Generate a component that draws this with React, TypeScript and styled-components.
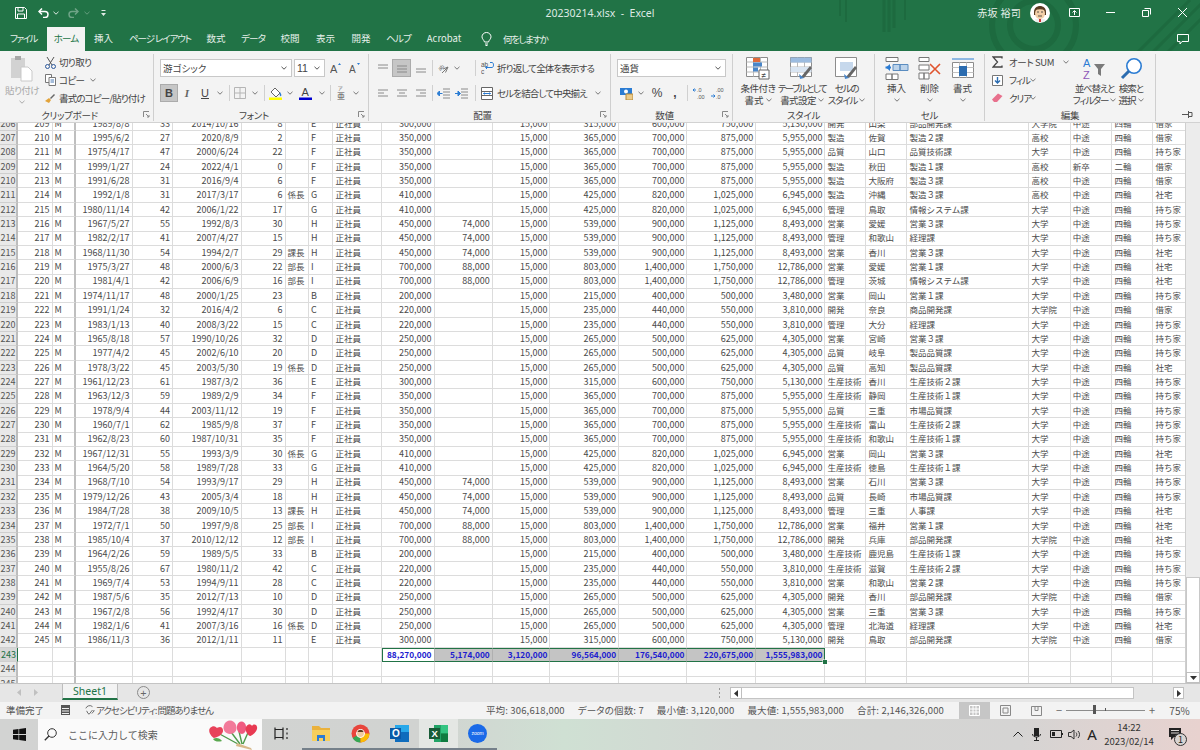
import React from 'react';
import styled, { createGlobalStyle, css } from 'styled-components';

const JP = '"Noto Sans CJK JP", "Noto Sans", sans-serif';

const GlobalStyle = createGlobalStyle`
  html, body { margin: 0; padding: 0; background: #fff; }
  * { box-sizing: border-box; }
  body { font-family: ${JP}; }
`;

/* ---------- sheet data ---------- */
const widths = [18, 34.5, 23.5, 56.5, 40.5, 68.5, 44, 23.5, 23.5, 49, 53, 58.2, 57.8, 68.6, 68.4, 68.8, 69.2, 41, 41, 122, 41.3, 41.7, 41, 32.5];
const GRID = widths.map((w) => `${w}px`).join(' ');
const RIGHT_COLS = [1, 3, 4, 5, 6, 10, 11, 12, 13, 14, 15, 16];
const CJK_COLS = [7, 9, 17, 18, 19, 20, 21, 22, 23];

const pay: Record<string, string[]> = {
  B: ['200,000', '', '15,000', '215,000', '400,000', '500,000', '3,480,000'],
  C: ['220,000', '', '15,000', '235,000', '440,000', '550,000', '3,810,000'],
  D: ['250,000', '', '15,000', '265,000', '500,000', '625,000', '4,305,000'],
  E: ['300,000', '', '15,000', '315,000', '600,000', '750,000', '5,130,000'],
  F: ['350,000', '', '15,000', '365,000', '700,000', '875,000', '5,955,000'],
  G: ['410,000', '', '15,000', '425,000', '820,000', '1,025,000', '6,945,000'],
  H: ['450,000', '74,000', '15,000', '539,000', '900,000', '1,125,000', '8,493,000'],
  I: ['700,000', '88,000', '15,000', '803,000', '1,400,000', '1,750,000', '12,786,000'],
};

// id|birth|age|hired|years|title|grade|dept|pref|section|school|entry|commute|home
const raw = [
  '209|1989/8/8|33|2014/10/16|8||E|開発|山梨|部品開発課|大学院|中途|四輪|借家',
  '210|1995/6/2|27|2020/8/9|2||F|製造|佐賀|製造２課|高校|中途|四輪|借家',
  '211|1975/4/17|47|2000/6/24|22||F|品質|山口|品質技術課|大学|中途|四輪|持ち家',
  '212|1999/1/27|24|2022/4/1|0||F|製造|秋田|製造１課|高校|新卒|二輪|借家',
  '213|1991/6/28|31|2016/9/4|6||F|製造|大阪府|製造３課|高校|中途|四輪|借家',
  '214|1992/1/8|31|2017/3/17|6|係長|G|製造|沖縄|製造３課|高校|中途|四輪|社宅',
  '215|1980/11/14|42|2006/1/22|17||G|管理|鳥取|情報システム課|大学|中途|四輪|持ち家',
  '216|1967/5/27|55|1992/8/3|30||H|営業|愛媛|営業３課|大学|中途|四輪|持ち家',
  '217|1982/2/17|41|2007/4/27|15||H|管理|和歌山|経理課|大学|中途|四輪|持ち家',
  '218|1968/11/30|54|1994/2/7|29|課長|H|営業|香川|営業３課|大学|中途|四輪|社宅',
  '219|1975/3/27|48|2000/6/3|22|部長|I|営業|愛媛|営業１課|大学|中途|四輪|社宅',
  '220|1981/4/1|42|2006/6/9|16|部長|I|管理|茨城|情報システム課|大学|中途|四輪|社宅',
  '221|1974/11/17|48|2000/1/25|23||B|営業|岡山|営業１課|大学|中途|四輪|持ち家',
  '222|1991/1/24|32|2016/4/2|6||C|開発|奈良|商品開発課|大学院|中途|四輪|借家',
  '223|1983/1/13|40|2008/3/22|15||C|管理|大分|経理課|大学|中途|四輪|持ち家',
  '224|1965/8/18|57|1990/10/26|32||D|営業|宮崎|営業３課|大学|中途|四輪|持ち家',
  '225|1977/4/2|45|2002/6/10|20||D|品質|岐阜|製品品質課|大学|中途|四輪|持ち家',
  '226|1978/3/22|45|2003/5/30|19|係長|D|品質|高知|製品品質課|大学|中途|四輪|社宅',
  '227|1961/12/23|61|1987/3/2|36||E|生産技術|香川|生産技術２課|大学|中途|四輪|持ち家',
  '228|1963/12/3|59|1989/2/9|34||F|生産技術|静岡|生産技術１課|大学|中途|四輪|持ち家',
  '229|1978/9/4|44|2003/11/12|19||F|品質|三重|市場品質課|大学|中途|四輪|持ち家',
  '230|1960/7/1|62|1985/9/8|37||F|生産技術|富山|生産技術２課|大学|中途|四輪|持ち家',
  '231|1962/8/23|60|1987/10/31|35||F|生産技術|和歌山|生産技術１課|大学|中途|四輪|持ち家',
  '232|1967/12/31|55|1993/3/9|30|係長|G|営業|岡山|営業３課|大学|中途|四輪|社宅',
  '233|1964/5/20|58|1989/7/28|33||G|生産技術|徳島|生産技術１課|大学|中途|四輪|持ち家',
  '234|1968/7/10|54|1993/9/17|29||H|営業|石川|営業３課|大学|中途|四輪|持ち家',
  '235|1979/12/26|43|2005/3/4|18||H|品質|長崎|市場品質課|大学|中途|四輪|持ち家',
  '236|1984/7/28|38|2009/10/5|13|課長|H|管理|三重|人事課|大学|中途|四輪|社宅',
  '237|1972/7/1|50|1997/9/8|25|部長|I|営業|福井|営業１課|大学|中途|四輪|社宅',
  '238|1985/10/4|37|2010/12/12|12|部長|I|開発|兵庫|部品開発課|大学院|中途|四輪|社宅',
  '239|1964/2/26|59|1989/5/5|33||B|生産技術|鹿児島|生産技術１課|大学|中途|四輪|持ち家',
  '240|1955/8/26|67|1980/11/2|42||C|生産技術|滋賀|生産技術２課|大学|中途|四輪|持ち家',
  '241|1969/7/4|53|1994/9/11|28||C|営業|和歌山|営業２課|大学|中途|四輪|持ち家',
  '242|1987/5/6|35|2012/7/13|10||D|開発|香川|部品開発課|大学院|中途|四輪|借家',
  '243|1967/2/8|56|1992/4/17|30||D|営業|三重|営業３課|大学|中途|四輪|持ち家',
  '244|1982/1/6|41|2007/3/16|16|係長|D|管理|北海道|経理課|大学|中途|四輪|社宅',
  '245|1986/11/3|36|2012/1/11|11||E|開発|鳥取|部品開発課|大学院|中途|四輪|借家',
];

const toCells = (line: string) => {
  const [id, birth, age, hired, years, title, grade, ...rest] = line.split('|');
  return [id, 'M', birth, age, hired, years, title, grade, '正社員', ...pay[grade], ...rest];
};

const totals = ['88,270,000', '5,174,000', '3,120,000', '96,564,000', '176,540,000', '220,675,000', '1,555,983,000'];

/* ---------- page frame ---------- */
const Page = styled.div`
  width: 1200px;
  height: 750px;
  display: flex;
  flex-direction: column;
  overflow: hidden;
  font-family: ${JP};
  font-feature-settings: 'palt';
`;

const Header = styled.header`
  position: relative;
  height: 51px;
  flex: none;
  background: #217346;
  color: #e6f0ea;
  overflow: hidden;
`;

const HeaderArt = styled.svg`
  position: absolute;
  inset: 0;
`;

const TitleRow = styled.div`
  position: relative;
  height: 25px;
  display: grid;
  grid-template-columns: 1fr auto 1fr;
  align-items: center;
`;

const QuickAccess = styled.div`
  display: flex;
  align-items: center;
  padding-left: 14px;
`;

const QuickBtn = styled.span<{ $w: number; $dim?: boolean; $ml?: number }>`
  width: ${(p) => p.$w}px;
  height: 16px;
  margin-left: ${(p) => p.$ml ?? 0}px;
  display: flex;
  align-items: center;
  justify-content: center;
  opacity: ${(p) => (p.$dim ? 0.35 : 1)};
`;

const FileName = styled.div`
  font-family: 'Noto Sans', sans-serif;
  font-size: 10.5px;
  white-space: pre;
  color: #dfeae4;
`;

const WindowControls = styled.div`
  display: flex;
  align-items: center;
  justify-content: flex-end;
`;

const UserName = styled.span`
  font-size: 10px;
  margin-right: 9px;
  letter-spacing: 0.3px;
`;

const AvatarSlot = styled.span`
  display: flex;
  margin-right: 6px;
`;

const WinBtn = styled.span`
  width: 36px;
  height: 25px;
  display: flex;
  align-items: center;
  justify-content: center;
`;

const TabRow = styled.nav`
  position: relative;
  height: 26px;
  display: flex;
  align-items: flex-end;
`;

const Tab = styled.div<{ $w: number; $active?: boolean; $ls?: number }>`
  width: ${(p) => p.$w}px;
  height: 24px;
  line-height: 23px;
  text-align: center;
  font-size: 9.5px;
  white-space: nowrap;
  letter-spacing: ${(p) => p.$ls ?? 0}px;
  background: ${(p) => (p.$active ? '#f3f3f3' : 'transparent')};
  color: ${(p) => (p.$active ? '#217346' : '#e6f0ea')};
`;

const TellMe = styled.div`
  display: flex;
  align-items: center;
  gap: 11px;
  height: 24px;
  padding-left: 11px;
  font-size: 9.5px;
  letter-spacing: -1.4px;
`;

const CommentBtn = styled.div`
  margin-left: auto;
  height: 24px;
  padding-right: 11px;
  display: flex;
  align-items: center;
`;

/* ---------- ribbon ---------- */
const Ribbon = styled.section`
  height: 72px;
  flex: none;
  display: flex;
  background: #f3f3f3;
  border-bottom: 1px solid #d2d2d2;
  color: #444;
  font-size: 9.5px;
  position: relative;
  z-index: 2;
`;

const Group = styled.div<{ $w: number; $plain?: boolean }>`
  width: ${(p) => p.$w}px;
  flex: none;
  display: flex;
  flex-direction: column;
  margin-top: 3px;
  height: 67px;
  border-right: ${(p) => (p.$plain ? 'none' : '1px solid #cfcfcf')};
`;

const GroupBody = styled.div<{ $pad?: number }>`
  height: 56px;
  display: flex;
  padding-left: ${(p) => p.$pad ?? 0}px;
`;

const GroupLabel = styled.div<{ $launcher?: boolean }>`
  position: relative;
  height: 12px;
  line-height: 12px;
  text-align: center;
  white-space: nowrap;
  font-size: 9.5px;
  letter-spacing: -0.3px;
  padding-right: ${(p) => (p.$launcher ? 14 : 0)}px;
`;

const Launcher = styled.svg`
  position: absolute;
  right: 3px;
  top: 2px;
`;

const PinIcon = styled.svg`
  position: absolute;
  right: 7px;
  top: 2px;
`;

const Stack = styled.div<{ $w?: number; $top?: number }>`
  width: ${(p) => (p.$w ? `${p.$w}px` : 'auto')};
  margin-top: ${(p) => p.$top ?? 0}px;
  display: flex;
  flex-direction: column;
`;

const ActionRow = styled.div`
  height: 18px;
  display: flex;
  align-items: center;
  white-space: nowrap;
`;

const ActionIcon = styled.span<{ $w: number }>`
  width: ${(p) => p.$w}px;
  flex: none;
  display: flex;
  align-items: center;
  justify-content: center;
`;

const Label = styled.span<{ $ls?: number; $w?: number; $ml?: number }>`
  display: inline-block;
  white-space: nowrap;
  letter-spacing: ${(p) => p.$ls ?? 0}px;
  width: ${(p) => (p.$w ? `${p.$w}px` : 'auto')};
  margin-left: ${(p) => p.$ml ?? 0}px;
`;

const ToolRow = styled.div<{ $top?: number }>`
  height: 18px;
  margin-top: ${(p) => p.$top ?? 0}px;
  display: flex;
  align-items: center;
  white-space: nowrap;
`;

const glyphs = {
  bold: css`font-weight: 700; font-family: 'Liberation Sans', sans-serif;`,
  italic: css`font-style: italic; font-weight: 700; font-family: 'Liberation Serif', serif; color: #666;`,
  under: css`text-decoration: underline; font-family: 'Liberation Sans', sans-serif;`,
  percent: css`font-size: 12px; font-family: 'Liberation Sans', sans-serif;`,
  comma: css`font-size: 12px; font-weight: 700; font-family: 'Liberation Sans', sans-serif;`,
};

const ToolBtn = styled.span<{ $w: number; $on?: boolean; $glyph?: keyof typeof glyphs; $ml?: number }>`
  width: ${(p) => p.$w}px;
  height: 18px;
  margin-left: ${(p) => p.$ml ?? 0}px;
  flex: none;
  display: flex;
  align-items: center;
  justify-content: center;
  font-size: 11px;
  background: ${(p) => (p.$on ? '#c6c6c6' : 'transparent')};
  box-shadow: ${(p) => (p.$on ? 'inset 0 0 0 1px #ababab' : 'none')};
  ${(p) => p.$glyph && glyphs[p.$glyph]}
`;

const ToolSep = styled.span<{ $w: number }>`
  width: ${(p) => p.$w}px;
  height: 16px;
  flex: none;
  display: flex;
  justify-content: center;
  &::after {
    content: '';
    width: 1px;
    background: #d0d0d0;
  }
`;

const ComboBox = styled.div<{ $w: number; $latin?: boolean; $ml?: number }>`
  width: ${(p) => p.$w}px;
  height: 18px;
  margin-left: ${(p) => p.$ml ?? 0}px;
  flex: none;
  display: flex;
  align-items: center;
  justify-content: space-between;
  padding: 0 4px 0 2px;
  background: #fff;
  border: 1px solid #c8c8c8;
  font-size: ${(p) => (p.$latin ? 10.5 : 9.5)}px;
  font-family: ${(p) => (p.$latin ? "'Liberation Sans', sans-serif" : 'inherit')};
  color: #444;
`;

const BigButton = styled.div<{ $w: number }>`
  width: ${(p) => p.$w}px;
  flex: none;
  display: flex;
  flex-direction: column;
  align-items: center;
  padding-top: 1px;
`;

const BigIcon = styled.div`
  height: 27px;
  display: flex;
  align-items: center;
  justify-content: center;
`;

const BigLine = styled.div<{ $muted?: boolean; $top?: number; $ls?: number }>`
  height: 12px;
  margin-top: ${(p) => p.$top ?? 0}px;
  line-height: 12px;
  white-space: nowrap;
  display: flex;
  align-items: center;
  justify-content: center;
  gap: 2px;
  letter-spacing: ${(p) => p.$ls ?? 0}px;
  color: ${(p) => (p.$muted ? '#a8a8a8' : '#444')};
`;

const Chev = ({ c = '#777' }: { c?: string }) => (
  <svg width="6" height="4" viewBox="0 0 6 4"><path d="M.5.8 3 3.2 5.5.8" fill="none" stroke={c} /></svg>
);

/* ---------- sheet ---------- */
const SheetArea = styled.div`
  height: 561px;
  flex: none;
  display: flex;
  border-bottom: 1px solid #c4c4c4;
`;

const SheetView = styled.div`
  width: 1186px;
  flex: none;
  overflow: hidden;
  position: relative;
  background: #fff;
  border-right: 1px solid #cfcfcf;
`;

const SheetRows = styled.div`
  margin-top: -6.5px;
  color: #4a4a4a;
  font-size: 9px;
  font-feature-settings: normal;
`;

const SheetRow = styled.div`
  display: grid;
  grid-template-columns: ${GRID};
  height: 14.37px;
`;

const RowHead = styled.div<{ $active?: boolean }>`
  background: ${(p) => (p.$active ? '#d6d6d6' : '#e9e9e9')};
  color: ${(p) => (p.$active ? '#217346' : '#555')};
  border-right: ${(p) => (p.$active ? '1.5px solid #217346' : '2px solid #bdbdbd')};
  border-bottom: 1px solid #cfcfcf;
  text-align: center;
  line-height: 13.5px;
`;

const Cell = styled.div<{ $right?: boolean; $freeze?: boolean; $cjk?: boolean; $indent?: boolean }>`
  border-right: ${(p) => (p.$freeze ? '2px solid #bfbfbf' : '1px solid #dcdcdc')};
  border-bottom: 1px solid #dcdcdc;
  text-align: ${(p) => (p.$right ? 'right' : 'left')};
  padding: 0 2px 0 ${(p) => (p.$indent ? 3 : 2)}px;
  font-size: ${(p) => (p.$cjk ? 8.5 : 9)}px;
  line-height: 13.5px;
  white-space: nowrap;
`;

const TotalCell = styled.div<{ $first?: boolean; $last?: boolean }>`
  position: relative;
  background: ${(p) => (p.$first ? '#fff' : '#c4c4c4')};
  border-top: 1.5px solid #217346;
  border-bottom: 1.5px solid #217346;
  border-left: ${(p) => (p.$first ? '1.5px solid #217346' : 'none')};
  border-right: ${(p) => (p.$last ? '1.5px solid #217346' : '1px solid #b0b0b0')};
  color: #1c1cd0;
  font-size: 8.3px;
  font-weight: 700;
  text-align: right;
  padding-right: 2px;
  line-height: 11.5px;
  white-space: nowrap;
`;

const FillHandle = styled.span`
  position: absolute;
  right: -3px;
  bottom: -3px;
  width: 4px;
  height: 4px;
  background: #217346;
  box-shadow: 0 0 0 0.5px #fff;
`;

const VScroll = styled.div`
  flex: 1;
  display: flex;
  flex-direction: column;
  justify-content: flex-end;
  background: #ececec;
`;

const VThumb = styled.div`
  height: 95px;
  background: #fff;
  border: 1px solid #c8c8c8;
  border-bottom: none;
`;

const ArrowBtn = styled.div<{ $w?: number; $h?: number }>`
  width: ${(p) => (p.$w ? `${p.$w}px` : 'auto')};
  height: ${(p) => (p.$h ? `${p.$h}px` : 'auto')};
  flex: none;
  display: flex;
  align-items: center;
  justify-content: center;
  background: #fff;
  border: 1px solid #bfbfbf;
`;

/* ---------- sheet tab bar ---------- */
const TabBar = styled.div`
  height: 18px;
  flex: none;
  display: flex;
  align-items: flex-start;
  background: #e6e6e6;
  color: #444;
`;

const NavArrows = styled.div`
  width: 62px;
  height: 17px;
  flex: none;
  display: flex;
  align-items: center;
  padding-left: 17px;
  gap: 13px;
`;

const SheetTab = styled.div`
  width: 56px;
  height: 16px;
  flex: none;
  line-height: 14px;
  text-align: center;
  background: #f3f3f3;
  color: #217346;
  font-family: 'Noto Sans', sans-serif;
  font-size: 10.5px;
  border-left: 1px solid #bdbdbd;
  border-right: 1px solid #bdbdbd;
  border-bottom: 2px solid #217346;
`;

const AddSheet = styled.div`
  width: 13px;
  height: 13px;
  margin: 2px 0 0 19px;
  flex: none;
  display: flex;
  align-items: center;
  justify-content: center;
  border: 1px solid #8a8a8a;
  border-radius: 50%;
  font-family: 'Noto Sans', sans-serif;
  font-size: 11px;
  line-height: 1;
  color: #666;
`;

const SplitDots = styled.div`
  margin: 3px 0 0 568px;
  width: 3px;
  height: 11px;
  flex: none;
  background: radial-gradient(circle, #999 0.8px, transparent 1px) 0 0 / 3px 4px;
`;

const HScroll = styled.div`
  margin: 3px 0 0 9px;
  height: 12px;
  display: flex;
  width: 454px;
  flex: none;
`;

const HThumb = styled.div`
  width: 392px;
  background: #fff;
  border: 1px solid #c4c4c4;
  border-left: none;
`;

const HTrack = styled.div`
  flex: 1;
`;

/* ---------- status bar ---------- */
const StatusBar = styled.footer`
  height: 16.5px;
  flex: none;
  display: flex;
  align-items: center;
  background: #f3f3f3;
  color: #555;
  font-size: 9.5px;
  white-space: nowrap;
`;

const StatusLeft = styled.div`
  display: flex;
  align-items: center;
  padding-left: 6px;
`;

const StatusGlyph = styled.span<{ $ml: number }>`
  display: flex;
  margin-left: ${(p) => p.$ml}px;
`;

const StatusStats = styled.div`
  margin-left: auto;
  display: flex;
  gap: 13px;
  margin-right: 15px;
  letter-spacing: 0.15px;
`;

const ViewBtn = styled.div<{ $on?: boolean }>`
  width: 31px;
  height: 16.5px;
  display: flex;
  align-items: center;
  justify-content: center;
  background: ${(p) => (p.$on ? '#c6c6c6' : 'transparent')};
`;

const ZoomSign = styled.span`
  width: 14px;
  text-align: center;
  font-size: 11px;
  color: #666;
`;

const ZoomTrack = styled.div`
  position: relative;
  width: 79px;
  height: 1px;
  background: #8c8c8c;
`;

const ZoomThumb = styled.span<{ $x: number; $h: number; $w: number }>`
  position: absolute;
  left: ${(p) => p.$x}px;
  top: ${(p) => -p.$h / 2}px;
  width: ${(p) => p.$w}px;
  height: ${(p) => p.$h}px;
  background: #555;
`;

const ZoomPct = styled.span`
  width: 41px;
  text-align: center;
  font-size: 10px;
  color: #555;
`;

/* ---------- taskbar ---------- */
const Taskbar = styled.footer`
  height: 31.5px;
  flex: none;
  display: flex;
  align-items: stretch;
  background: linear-gradient(90deg, #d2d3d2 0%, #d1d3d1 35%, #cfe0d3 47%, #d3d6d3 62%, #d5d4d3 85%, #e8d2cf 100%);
`;

const StartBtn = styled.div`
  width: 38px;
  flex: none;
  display: flex;
  align-items: center;
  justify-content: center;
`;

const SearchBox = styled.div`
  width: 224px;
  flex: none;
  display: flex;
  align-items: center;
  background: #fafafa;
  font-size: 10px;
  font-feature-settings: normal;
  color: #5a5a5a;
  padding-left: 6px;
  gap: 11px;
`;

const SearchHint = styled.span`
  flex: 1;
  white-space: nowrap;
`;

const TaskIcon = styled.div<{ $w?: number; $open?: boolean; $active?: boolean }>`
  width: ${(p) => p.$w ?? 39}px;
  flex: none;
  display: flex;
  align-items: center;
  justify-content: center;
  background: ${(p) => (p.$active ? '#e4e7e4' : 'transparent')};
  border-bottom: ${(p) => (p.$open ? '2px solid #75808a' : '2px solid transparent')};
  background-clip: padding-box;
`;

const Tray = styled.div`
  margin-left: auto;
  display: flex;
  align-items: stretch;
  color: #222;
`;

const TrayItem = styled.div<{ $w: number; $pr?: number }>`
  width: ${(p) => p.$w}px;
  padding-right: ${(p) => p.$pr ?? 0}px;
  flex: none;
  display: flex;
  align-items: center;
  justify-content: center;
`;

const Clock = styled.div`
  width: 52px;
  flex: none;
  display: flex;
  flex-direction: column;
  align-items: center;
  justify-content: center;
  font-size: 9.5px;
  line-height: 14px;
  font-feature-settings: normal;
  color: #333;
`;

const ImeA = styled.span`
  font-family: 'Noto Sans', sans-serif;
  font-size: 15px;
  color: #222;
`;

const NotifyIcon = styled.span`
  position: relative;
  display: flex;
`;

const NotifyBadge = styled.span`
  position: absolute;
  right: -6px;
  bottom: -6px;
  width: 13px;
  height: 13px;
  border: 1px solid #333;
  border-radius: 50%;
  background: #d8d4d2;
  font-size: 9px;
  line-height: 11px;
  text-align: center;
  color: #222;
`;

const FlipSvg = styled.svg`
  transform: scaleX(-1);
`;

/* ---------- icons ---------- */
const UNDO = (
  <>
    <path d="M4 .5 1 3.500l3 3" />
    <path d="M1.500 3.500H7c4 0 4 6 0 6H5" />
  </>
);
const SaveIcon = () => (
  <svg width="12" height="12" viewBox="0 0 12 12" fill="none" stroke="#fff"><path d="M.5.5h9l2 2v9H.5z" /><path d="M3 .5v3.500h5V.5M2.500 11.500V7h7v4.500" /></svg>
);
const UndoIcon = () => <svg width="12" height="10" viewBox="0 0 12 10" fill="none" stroke="#fff" strokeWidth="1.500">{UNDO}</svg>;
const RedoIcon = () => <FlipSvg width="12" height="10" viewBox="0 0 12 10" fill="none" stroke="#fff" strokeWidth="1.500">{UNDO}</FlipSvg>;
const ScissorsIcon = () => (
  <svg width="11" height="13" viewBox="0 0 11 13" fill="none" stroke="#555"><path d="M2 1l5 8M9 1 4 9" /><circle cx="2.500" cy="10.500" r="2" stroke="#2b579a" /><circle cx="8.500" cy="10.500" r="2" stroke="#2b579a" /></svg>
);
const CopyIcon = () => (
  <svg width="11" height="12" viewBox="0 0 11 12" fill="#fff" stroke="#777"><path d="M.5.5h6v8h-6z" /><path d="M4 3.500h6.500v8H4z" /><path d="M5.500 6h3.500M5.500 8h3.500" stroke="#4a7ab5" /></svg>
);
const BrushIcon = () => (
  <svg width="11" height="11" viewBox="0 0 11 11"><path d="M0 8 4 5l2 2-2 3z" fill="#e2a33a" /><path d="M5 5l4-4 1 1-4 4z" fill="#666" /></svg>
);
const PasteIcon = () => (
  <svg width="24" height="27" viewBox="0 0 24 27"><path d="M1 3h14v20H1z" fill="#d2d2d2" /><path d="M5 1h6v4H5z" fill="#a8a8a8" /><path d="M11 12h7l4 4v10H11z" fill="#fff" stroke="#c9c9c9" /></svg>
);
const BorderIcon = () => (
  <svg width="12" height="12" viewBox="0 0 12 12" fill="none" stroke="#b5b5b5"><path d="M.5.5h11v11H.5zM6 .5v11M.5 6h11" /></svg>
);
const FillIcon = () => (
  <svg width="14" height="14" viewBox="0 0 14 14"><path d="M2 6 6 2l5 5-4 4z" fill="#fff" stroke="#666" /><path d="M11 6c1 2 2 3 1 4s-2-2-1-4z" fill="#2b7cd3" /><rect y="11.500" width="13" height="2.500" fill="#ffff00" /></svg>
);
const FontColorIcon = () => (
  <svg width="14" height="14" viewBox="0 0 14 14"><text x="2.500" y="10" fontSize="11" fontFamily="Liberation Sans" fill="#444">A</text><rect y="11.500" width="13" height="2.500" fill="#0000d0" /></svg>
);
const GrowFont = ({ big }: { big?: boolean }) => (
  <svg width="12" height="12" viewBox="0 0 12 12"><text x="0" y="11" fontSize={big ? 11 : 10} fontFamily="Liberation Sans" fill="#555">A</text><path d={big ? 'M8 3l1.500-2L11 3z' : 'M8 1l1.500 2L11 1z'} fill="#2b7cd3" /></svg>
);
const RubyIcon = () => (
  <svg width="12" height="16" viewBox="0 0 12 16"><text x="3" y="5" fontSize="5" fontFamily="Noto Sans CJK JP" fill="#555">ア</text><text x="2" y="14" fontSize="8" fontFamily="Noto Sans CJK JP" fill="#555">亜</text></svg>
);
const Lines = ({ ys, xs }: { ys: number[]; xs: [number, number][] }) => (
  <svg width="12" height="11" viewBox="0 0 12 11" stroke="#8a8a8a">{ys.map((y, i) => <path key={y} d={`M${xs[i][0]} ${y}H${xs[i][1]}`} />)}</svg>
);
const OrientIcon = () => (
  <svg width="14" height="14" viewBox="0 0 14 14"><text x="3" y="9" fontSize="5.500" fontFamily="Liberation Sans" fill="#555" transform="rotate(-45 5 8)">ab</text><path d="M6 12l6-6M9.500 11.500 12 6 7 8" fill="none" stroke="#777" /></svg>
);
const IndentIcon = ({ inc }: { inc?: boolean }) => (
  <svg width="13" height="11" viewBox="0 0 13 11"><path d="M6 1h7M6 4h7M6 7h7M6 10h7" stroke="#8a8a8a" /><path d={inc ? 'M0 5.500h3V3l2.500 2.500L3 8V5.500' : 'M5.500 5.500h-3V3L0 5.500 2.500 8V5.500'} fill="#2b7cd3" stroke="#2b7cd3" /></svg>
);
const WrapIcon = () => (
  <svg width="13" height="12" viewBox="0 0 13 12"><text x="0" y="5" fontSize="6.500" fontFamily="Liberation Sans" fill="#555">ab</text><text x="0" y="11.500" fontSize="6.500" fontFamily="Liberation Sans" fill="#555">c</text><path d="M9 .5h2c2 0 2 5 0 5H5" fill="none" stroke="#2b7cd3" /><path d="M6 4 4.500 5.500 6 7" fill="none" stroke="#2b7cd3" /></svg>
);
const MergeIcon = () => (
  <svg width="12" height="13" viewBox="0 0 12 13" fill="#fff" stroke="#666"><path d="M.5.5h11v12H.5z" /><path d="M.5 4.500h11M.5 8.500h11" /><path d="M2.500 6.500h7M3.500 5.500l-1 1 1 1M8.500 5.500l1 1-1 1" stroke="#2b7cd3" fill="none" /></svg>
);
const CurrencyIcon = () => (
  <svg width="13" height="13" viewBox="0 0 13 13"><path d="M0 1h12v7H0z" fill="#2b7cd3" /><circle cx="6" cy="4.500" r="2" fill="#fff" /><path d="M6 7h7v6H6z" fill="#eccb8a" stroke="#b78a3a" /></svg>
);
const DecimalIcon = ({ more }: { more?: boolean }) => (
  <svg width="14" height="12" viewBox="0 0 14 12"><text x="5" y="5" fontSize="5.500" fontFamily="Liberation Sans" fill="#555">{more ? '.0' : '.00'}</text><text x="5" y="11.500" fontSize="5.500" fontFamily="Liberation Sans" fill="#555">{more ? '.00' : '.0'}</text><path d={more ? 'M1 3h3M1 3l1.500-1.500M1 3l1.500 1.500' : 'M0 9h4M4 9 2.500 7.500M4 9l-1.500 1.500'} stroke="#2b7cd3" fill="none" /></svg>
);
const GridCells = () => (
  <>
    <path d="M.5.5h21v19H.5z" fill="#fff" stroke="#8c8c8c" />
    <path d="M.5 5h21M.5 10h21M.5 15h21M7.500.5v19M14.500.5v19" stroke="#b9b9b9" />
  </>
);
const CondIcon = () => (
  <svg width="24" height="23" viewBox="0 0 24 23">
    <GridCells />
    <path d="M7 1h7v4H7z" fill="#e06b3a" />
    <path d="M7 5.500h9v4H7z" fill="#4a86c8" />
    <path d="M7 10.500h5v4H7z" fill="#4a86c8" />
    <path d="M13 13h10v9H13z" fill="#fff" stroke="#666" />
    <text x="15.500" y="21" fontSize="8" fontFamily="Liberation Sans" fill="#444">≠</text>
  </svg>
);
const TableIcon = () => (
  <svg width="24" height="23" viewBox="0 0 24 23">
    <GridCells />
    <path d="M.5.5h21v5H.5z" fill="#9cbce0" />
    <path d="M.5 10h21v5H.5z" fill="#d9e5f2" />
    <path d="M11 20 20 9l2 2-8 10z" fill="#666" />
    <path d="M9 17l5 4-4 1z" fill="#4a86c8" />
  </svg>
);
const CellStyleIcon = () => (
  <svg width="24" height="23" viewBox="0 0 24 23">
    <path d="M.5.5h21v19H.5z" fill="#fff" stroke="#8c8c8c" />
    <path d="M5 5h13v9H5z" fill="#c6d8ec" />
    <path d="M11 20 20 9l2 2-8 10z" fill="#666" />
    <path d="M9 17l5 4-4 1z" fill="#4a86c8" />
  </svg>
);
const InsertIcon = () => (
  <svg width="24" height="23" viewBox="0 0 24 23" fill="#fff" stroke="#777">
    <path d="M1 .5h12v4H1zM1 17h6v5.500H1zM7 17h6v5.500H7z" />
    <path d="M8 7.500h7v6H8zM15 7.500h8v6h-8z" fill="#bcd3ea" stroke="#5a8cc0" />
    <path d="M.5 10.500H6" stroke="#2b7cd3" strokeWidth="2" />
    <path d="M5 7 1 10.500 5 14z" fill="#2b7cd3" stroke="none" />
  </svg>
);
const DeleteIcon = () => (
  <svg width="24" height="23" viewBox="0 0 24 23" fill="#fff" stroke="#777">
    <path d="M1 .5h10v4H1zM1 8h10v5H1zM1 16h5v6H1zM6 16h5v6H6z" />
    <path d="M12 7l10 10M22 7 12 17" stroke="#e0542e" strokeWidth="1.600" />
  </svg>
);
const FormatIcon = () => (
  <svg width="24" height="24" viewBox="0 0 24 24" fill="#fff" stroke="#8c8c8c">
    <path d="M1 2h22" stroke="#2b7cd3" />
    <path d="M1.500 5.500h21v15h-21z" />
    <path d="M1.500 10.500h21M1.500 15.500h21M8.500 5.500v15M15.500 5.500v15" stroke="#c2c2c2" />
    <path d="M8 9h8v10H8z" fill="#2b6cb0" stroke="none" />
  </svg>
);
const SigmaIcon = () => <svg width="11" height="12" viewBox="0 0 11 12" fill="none" stroke="#444" strokeWidth="1.300"><path d="M10 2.500V1H1l4.500 5L1 11h9V9.500" /></svg>;
const FillDownIcon = () => (
  <svg width="11" height="11" viewBox="0 0 11 11"><path d="M.5.5h10v10H.5z" fill="#fff" stroke="#777" /><path d="M5.500 2v6M3 5.500 5.500 8 8 5.500" fill="none" stroke="#2b6cb0" strokeWidth="1.400" /></svg>
);
const EraserIcon = () => (
  <svg width="11" height="10" viewBox="0 0 11 10"><path d="M0 6.500 6 .5 10.500 3 5 9H2z" fill="#e8718d" /></svg>
);
const SortIcon = () => (
  <svg width="23" height="23" viewBox="0 0 23 23">
    <text x="0" y="10" fontSize="11" fontFamily="Liberation Sans" fill="#2b7cd3">A</text>
    <text x="0" y="22" fontSize="11" fontFamily="Liberation Sans" fill="#8d57b8">Z</text>
    <path d="M11 7h11l-4 5v7l-3-2v-5z" fill="#7a7a7a" />
  </svg>
);
const SearchBig = () => (
  <svg width="23" height="23" viewBox="0 0 23 23" fill="none"><circle cx="14" cy="9" r="7.200" stroke="#2b7cd3" strokeWidth="1.600" fill="#fff" /><path d="M9 14 2 21" stroke="#2b6cb0" strokeWidth="3" /></svg>
);
const Bulb = () => (
  <svg width="11" height="14" viewBox="0 0 11 14" fill="none" stroke="#fff"><path d="M3.500 10C3 8 1 7 1 4.800a4.500 4.300 0 0 1 9 0C10 7 8 8 7.500 10zM4 12h3M4.500 13.500h2" /></svg>
);
const Avatar = () => (
  <svg width="20" height="20" viewBox="0 0 20 20">
    <circle cx="10" cy="10" r="10" fill="#fff" />
    <path d="M4 9c0-8 12-8 12 0v3H4z" fill="#5a3b22" />
    <ellipse cx="10" cy="10.500" rx="5" ry="5.500" fill="#f3cfa8" />
    <path d="M5 7c2-3 8-3 10 0-3-1-7-1-10 0z" fill="#5a3b22" />
    <path d="M7 9h2M11 9h2M8 13h4" stroke="#333" strokeWidth=".8" />
    <path d="M5 16h10l-1 3H6z" fill="#eee" />
    <path d="M9 16h2v3H9z" fill="#c33" />
  </svg>
);
const WindowsLogo = () => (
  <svg width="13" height="13" viewBox="0 0 13 13" fill="#111"><path d="M0 1.800 5.500 1v5H0zM6.200.9 13 0v6H6.200zM0 7h5.500v5L0 11.200zM6.200 7H13v6l-6.800-.9z" /></svg>
);
const Magnifier = () => (
  <svg width="13" height="13" viewBox="0 0 13 13" fill="none" stroke="#333"><circle cx="8" cy="5" r="4.300" /><path d="M5 8 .8 12.200" strokeWidth="1.400" /></svg>
);
const Tulips = () => (
  <svg width="58" height="31" viewBox="0 0 58 31">
    <path d="M12 13 34 25M24 9 36 25M34 8 38 25M46 9 39 25" stroke="#4f9a4a" strokeWidth="1.400" fill="none" />
    <path d="M33 24l14 5 1 2-16-4z" fill="#d8b98a" />
    <path d="M6 9c4-4 7 0 7 0s5-3 6 2-8 8-9 8-7-6-4-10z" fill="#e8425a" />
    <path d="M20 6c2-6 10-6 12 0s-2 9-6 9-8-4-6-9z" fill="#f27a9a" />
    <path d="M33 7c1-6 8-6 9 0 1 5-2 8-4 8s-6-3-5-8z" fill="#f05a80" />
    <path d="M42 8c2-4 5-3 6-1 2-3 6-1 5 3s-6 7-7 7-6-5-4-9z" fill="#e83a52" />
    <path d="M9 20c3-2 7-1 9 2-3 1-7 1-9-2z" fill="#5aa84f" />
  </svg>
);
const TaskView = () => (
  <svg width="15" height="13" viewBox="0 0 15 13" fill="none" stroke="#222" strokeWidth="1.200"><path d="M1 .5v12M9 .5v12M1 2.500h8v8H1zM13 1v2M13 5.500v2M13 10v2" /></svg>
);
const Folder = () => (
  <svg width="18" height="15" viewBox="0 0 18 15"><path d="M0 0h7l2 2h9v3H0z" fill="#eab13c" /><path d="M0 4h18v11H0z" fill="#f6cf5c" /><path d="M5 9h8v6h-2v-3H7v3H5z" fill="#2b7cd3" /></svg>
);
const Chrome = () => (
  <svg width="19" height="19" viewBox="0 0 19 19">
    <circle cx="9.500" cy="9.500" r="9" fill="#e8453c" />
    <path d="M9.500 9.500 1.700 14a9 9 0 0 0 7.800 4.500z" fill="#34a853" />
    <path d="M9.500 9.500V18.500A9 9 0 0 0 18.500 9.500z" fill="#fbbc05" />
    <circle cx="9.500" cy="9.500" r="4.400" fill="#fff" />
    <circle cx="9.500" cy="9.500" r="3.400" fill="#f0c9a0" />
    <path d="M6.500 8c1-3 5-3 6 0z" fill="#5a3b22" />
  </svg>
);
const Outlook = () => (
  <svg width="19" height="17" viewBox="0 0 19 17">
    <path d="M5 0h14v13H5z" fill="#28a8ea" />
    <path d="M5 7h14v10H5z" fill="#0f6cbd" />
    <path d="M0 3h11v11H0z" fill="#0a5aa8" />
    <text x="2" y="12" fontSize="10" fontWeight="700" fontFamily="Liberation Sans" fill="#fff">O</text>
  </svg>
);
const ExcelLogo = () => (
  <svg width="19" height="17" viewBox="0 0 19 17">
    <path d="M5 0h14v17H5z" fill="#21a366" />
    <path d="M12 0h7v8.500h-7z" fill="#33c481" />
    <path d="M12 8.500h7V17h-7z" fill="#107c41" />
    <path d="M0 3h11v11H0z" fill="#185c37" />
    <text x="2.500" y="12" fontSize="9.500" fontWeight="700" fontFamily="Liberation Sans" fill="#fff">X</text>
  </svg>
);
const ZoomLogo = () => (
  <svg width="19" height="19" viewBox="0 0 19 19">
    <circle cx="9.500" cy="9.500" r="9.500" fill="#1a6ae8" />
    <text x="9.500" y="11" textAnchor="middle" fontSize="5" fontFamily="Liberation Sans" fill="#fff">zoom</text>
  </svg>
);

const launcher = (
  <Launcher width="7" height="7" viewBox="0 0 7 7" fill="none" stroke="#888"><path d="M6 .5H.5V6M3 3l3 3M6 4v2H4" /></Launcher>
);

const App = () => (
  <Page>
    <GlobalStyle />
    <Header>
      <HeaderArt width="1200" height="51" viewBox="0 0 1200 51" fill="none" stroke="#1d6a3f">
        <path d="M884 -2v34M889 -2v34M894 -2v30" strokeWidth="3" />
        <path d="M905 -2v22M840 -2v18M846 -2v24" strokeWidth="2" />
        <circle cx="1034" cy="25" r="24" strokeWidth="6" />
        <circle cx="1034" cy="25" r="42" strokeWidth="6" />
        <path d="M1130 60 1190 0M1145 60 1205 0M1160 60 1220 0" strokeWidth="3" />
      </HeaderArt>
      <TitleRow>
        <QuickAccess>
          <QuickBtn $w={14}><SaveIcon /></QuickBtn>
          <QuickBtn $w={15} $ml={8}><UndoIcon /></QuickBtn>
          <QuickBtn $w={10}><Chev c="#dfeae4" /></QuickBtn>
          <QuickBtn $w={14} $dim $ml={5}><RedoIcon /></QuickBtn>
          <QuickBtn $w={14} $dim><Chev c="#dfeae4" /></QuickBtn>
          <QuickBtn $w={18}><svg width="5" height="6" viewBox="0 0 5 6" fill="#dfeae4"><path d="M.5 0h4v1h-4zM0 3h5L2.500 6z" /></svg></QuickBtn>
        </QuickAccess>
        <FileName>{'20230214.xlsx  -  Excel'}</FileName>
        <WindowControls>
          <UserName>赤坂 裕司</UserName>
          <AvatarSlot><Avatar /></AvatarSlot>
          <WinBtn><svg width="11" height="9" viewBox="0 0 11 9" fill="none" stroke="#fff"><path d="M.5.5h10v8H.5z" /><path d="M5.500 7V3M3.500 4.500l2-2 2 2" /></svg></WinBtn>
          <WinBtn><svg width="9" height="1" viewBox="0 0 9 1"><path d="M0 .5h9" stroke="#fff" /></svg></WinBtn>
          <WinBtn><svg width="9" height="9" viewBox="0 0 9 9" fill="none" stroke="#fff"><path d="M2.500.5h6v6M.5 2.500h6v6h-6z" /></svg></WinBtn>
          <WinBtn><svg width="9" height="9" viewBox="0 0 9 9" stroke="#fff"><path d="M0 0l9 9M9 0 0 9" /></svg></WinBtn>
        </WindowControls>
      </TitleRow>
      <TabRow>
        <Tab $w={47} $ls={-1.5}>ファイル</Tab>
        <Tab $w={38} $active $ls={-0.8}>ホーム</Tab>
        <Tab $w={37}>挿入</Tab>
        <Tab $w={76} $ls={-1.1}>ページ レイアウト</Tab>
        <Tab $w={36}>数式</Tab>
        <Tab $w={38} $ls={-0.8}>データ</Tab>
        <Tab $w={36}>校閲</Tab>
        <Tab $w={35}>表示</Tab>
        <Tab $w={36}>開発</Tab>
        <Tab $w={39} $ls={-0.8}>ヘルプ</Tab>
        <Tab $w={52}>Acrobat</Tab>
        <TellMe><Bulb /><span>何をしますか</span></TellMe>
        <CommentBtn><svg width="12" height="11" viewBox="0 0 12 11" fill="none" stroke="#fff"><path d="M.5.5h11v7H5L3 10V7.500H.5z" /></svg></CommentBtn>
      </TabRow>
    </Header>

    <Ribbon>
      <Group $w={154}>
        <GroupBody>
          <BigButton $w={44}>
            <BigIcon><PasteIcon /></BigIcon>
            <BigLine $muted $top={2} $ls={-0.6}>貼り付け</BigLine>
            <BigLine><Chev c="#aaa" /></BigLine>
          </BigButton>
          <Stack $top={-1}>
            <ActionRow><ActionIcon $w={13}><ScissorsIcon /></ActionIcon><Label $ml={2} $ls={-0.6}>切り取り</Label></ActionRow>
            <ActionRow><ActionIcon $w={13}><CopyIcon /></ActionIcon><Label $ml={2} $w={31} $ls={-0.6}>コピー</Label><Chev /></ActionRow>
            <ActionRow><ActionIcon $w={13}><BrushIcon /></ActionIcon><Label $ml={2} $ls={-0.85}>書式のコピー/貼り付け</Label></ActionRow>
          </Stack>
        </GroupBody>
        <GroupLabel $launcher>クリップボード{launcher}</GroupLabel>
      </Group>

      <Group $w={215}>
        <GroupBody $pad={6}>
          <Stack>
            <ToolRow $top={5}>
              <ComboBox $w={132}>游ゴシック<Chev c="#555" /></ComboBox>
              <ComboBox $w={31} $latin $ml={2}>11<Chev c="#555" /></ComboBox>
              <ToolBtn $w={20} $ml={1}><GrowFont big /></ToolBtn>
              <ToolBtn $w={18}><GrowFont /></ToolBtn>
            </ToolRow>
            <ToolRow $top={7}>
              <ToolBtn $w={18} $on $glyph="bold">B</ToolBtn>
              <ToolBtn $w={18} $glyph="italic">I</ToolBtn>
              <ToolBtn $w={18} $glyph="under">U</ToolBtn>
              <ToolBtn $w={12}><Chev /></ToolBtn>
              <ToolSep $w={6} />
              <ToolBtn $w={16}><BorderIcon /></ToolBtn>
              <ToolBtn $w={14}><Chev /></ToolBtn>
              <ToolSep $w={4} />
              <ToolBtn $w={20}><FillIcon /></ToolBtn>
              <ToolBtn $w={8}><Chev /></ToolBtn>
              <ToolBtn $w={24}><FontColorIcon /></ToolBtn>
              <ToolBtn $w={8}><Chev /></ToolBtn>
              <ToolSep $w={8} />
              <ToolBtn $w={14}><RubyIcon /></ToolBtn>
              <ToolBtn $w={16}><Chev /></ToolBtn>
            </ToolRow>
          </Stack>
        </GroupBody>
        <GroupLabel $launcher>フォント{launcher}</GroupLabel>
      </Group>

      <Group $w={242}>
        <GroupBody $pad={4}>
          <Stack>
            <ToolRow $top={5}>
              <ToolBtn $w={19}><Lines ys={[2, 5]} xs={[[1, 11], [1, 11]]} /></ToolBtn>
              <ToolBtn $w={19} $on><Lines ys={[3, 6, 9]} xs={[[1, 11], [1, 11], [1, 11]]} /></ToolBtn>
              <ToolBtn $w={19}><Lines ys={[6, 9]} xs={[[1, 11], [1, 11]]} /></ToolBtn>
              <ToolSep $w={5} />
              <ToolBtn $w={16}><OrientIcon /></ToolBtn>
              <ToolBtn $w={12}><Chev /></ToolBtn>
              <ToolBtn $w={10} />
              <ToolSep $w={4} />
              <ToolBtn $w={20}><WrapIcon /></ToolBtn>
              <Label $ls={-0.85}>折り返して全体を表示する</Label>
            </ToolRow>
            <ToolRow $top={7}>
              <ToolBtn $w={19}><Lines ys={[2, 5, 8]} xs={[[1, 11], [1, 7], [1, 11]]} /></ToolBtn>
              <ToolBtn $w={19}><Lines ys={[2, 5, 8]} xs={[[1, 11], [3, 9], [1, 11]]} /></ToolBtn>
              <ToolBtn $w={19}><Lines ys={[2, 5, 8]} xs={[[1, 11], [5, 11], [1, 11]]} /></ToolBtn>
              <ToolSep $w={5} />
              <ToolBtn $w={16}><IndentIcon /></ToolBtn>
              <ToolBtn $w={20}><IndentIcon inc /></ToolBtn>
              <ToolBtn $w={2} />
              <ToolSep $w={4} />
              <ToolBtn $w={20}><MergeIcon /></ToolBtn>
              <Label $ls={-0.85} $w={90}>セルを結合して中央揃え</Label>
              <ToolBtn $w={22}><Chev /></ToolBtn>
            </ToolRow>
          </Stack>
        </GroupBody>
        <GroupLabel $launcher>配置{launcher}</GroupLabel>
      </Group>

      <Group $w={122}>
        <GroupBody $pad={6}>
          <Stack>
            <ToolRow $top={5}>
              <ComboBox $w={109}>通貨<Chev c="#555" /></ComboBox>
            </ToolRow>
            <ToolRow $top={7}>
              <ToolBtn $w={18}><CurrencyIcon /></ToolBtn>
              <ToolBtn $w={12}><Chev /></ToolBtn>
              <ToolBtn $w={20} $glyph="percent">%</ToolBtn>
              <ToolBtn $w={16} $glyph="comma">,</ToolBtn>
              <ToolSep $w={9} />
              <ToolBtn $w={14}><DecimalIcon more /></ToolBtn>
              <ToolBtn $w={4} />
              <ToolBtn $w={16}><DecimalIcon /></ToolBtn>
            </ToolRow>
          </Stack>
        </GroupBody>
        <GroupLabel $launcher>数値{launcher}</GroupLabel>
      </Group>

      <Group $w={142}>
        <GroupBody $pad={6}>
          <BigButton $w={38}>
            <BigIcon><CondIcon /></BigIcon>
            <BigLine $ls={-0.4}>条件付き</BigLine>
            <BigLine>書式 <Chev /></BigLine>
          </BigButton>
          <BigButton $w={50}>
            <BigIcon><TableIcon /></BigIcon>
            <BigLine $ls={-1.6}>テーブルとして</BigLine>
            <BigLine $ls={-0.6}>書式設定 <Chev /></BigLine>
          </BigButton>
          <BigButton $w={39}>
            <BigIcon><CellStyleIcon /></BigIcon>
            <BigLine $ls={-1.2}>セルの</BigLine>
            <BigLine $ls={-1.2}>スタイル <Chev /></BigLine>
          </BigButton>
        </GroupBody>
        <GroupLabel>スタイル</GroupLabel>
      </Group>

      <Group $w={110}>
        <GroupBody $pad={5}>
          <BigButton $w={33}><BigIcon><InsertIcon /></BigIcon><BigLine>挿入</BigLine><BigLine><Chev /></BigLine></BigButton>
          <BigButton $w={33}><BigIcon><DeleteIcon /></BigIcon><BigLine>削除</BigLine><BigLine><Chev /></BigLine></BigButton>
          <BigButton $w={33}><BigIcon><FormatIcon /></BigIcon><BigLine>書式</BigLine><BigLine><Chev /></BigLine></BigButton>
        </GroupBody>
        <GroupLabel>セル</GroupLabel>
      </Group>

      <Group $w={171}>
        <GroupBody>
          <Stack $w={89} $top={-1}>
            <ActionRow><ActionIcon $w={24}><SigmaIcon /></ActionIcon><Label $w={54} $ls={-0.4}>オート SUM</Label><Chev /></ActionRow>
            <ActionRow><ActionIcon $w={24}><FillDownIcon /></ActionIcon><Label $w={21} $ls={-1}>フィル</Label><Chev /></ActionRow>
            <ActionRow><ActionIcon $w={24}><EraserIcon /></ActionIcon><Label $w={21} $ls={-1}>クリア</Label><Chev /></ActionRow>
          </Stack>
          <BigButton $w={41}>
            <BigIcon><SortIcon /></BigIcon>
            <BigLine $ls={-1.2}>並べ替えと</BigLine>
            <BigLine $ls={-1.2}>フィルター <Chev /></BigLine>
          </BigButton>
          <BigButton $w={32}>
            <BigIcon><SearchBig /></BigIcon>
            <BigLine $ls={-1}>検索と</BigLine>
            <BigLine $ls={-1}>選択 <Chev /></BigLine>
          </BigButton>
        </GroupBody>
        <GroupLabel>編集</GroupLabel>
      </Group>

      <Group $w={44} $plain>
        <GroupBody />
        <GroupLabel>
          <PinIcon width="11" height="7" viewBox="0 0 11 7" fill="none" stroke="#555"><path d="M0 3.500h6M6.500 0v7M7 1.500h3v4H7" /></PinIcon>
        </GroupLabel>
      </Group>
    </Ribbon>

    <SheetArea>
      <SheetView>
        <SheetRows>
          {raw.map((line, i) => (
            <SheetRow key={line}>
              <RowHead>{206 + i}</RowHead>
              {toCells(line).map((text, c) => (
                <Cell key={c} $right={RIGHT_COLS.includes(c + 1)} $cjk={CJK_COLS.includes(c + 1)} $freeze={c === 1} $indent={c === 8}>{text}</Cell>
              ))}
            </SheetRow>
          ))}
          <SheetRow>
            <RowHead $active>243</RowHead>
            {widths.slice(1, 10).map((_, c) => <Cell key={c} $freeze={c === 1} />)}
            {totals.map((t, c) => (
              <TotalCell key={t} $first={c === 0} $last={c === totals.length - 1}>
                {t}
                {c === totals.length - 1 && <FillHandle />}
              </TotalCell>
            ))}
            {widths.slice(17).map((_, c) => <Cell key={c} />)}
          </SheetRow>
          {[244, 245].map((n) => (
            <SheetRow key={n}>
              <RowHead>{n}</RowHead>
              {widths.slice(1).map((_, c) => <Cell key={c} $freeze={c === 1} />)}
            </SheetRow>
          ))}
        </SheetRows>
      </SheetView>
      <VScroll>
        <VThumb />
        <ArrowBtn $h={11}><svg width="7" height="4" viewBox="0 0 7 4"><path d="M0 0h7L3.500 4z" fill="#333" /></svg></ArrowBtn>
      </VScroll>
    </SheetArea>

    <TabBar>
      <NavArrows>
        <svg width="4" height="7" viewBox="0 0 4 7"><path d="M4 0v7L0 3.500z" fill="#c0c0c0" /></svg>
        <svg width="4" height="7" viewBox="0 0 4 7"><path d="M0 0v7l4-3.500z" fill="#c0c0c0" /></svg>
      </NavArrows>
      <SheetTab>Sheet1</SheetTab>
      <AddSheet>+</AddSheet>
      <SplitDots />
      <HScroll>
        <ArrowBtn $w={12}><svg width="4" height="7" viewBox="0 0 4 7"><path d="M4 0v7L0 3.500z" fill="#333" /></svg></ArrowBtn>
        <HThumb />
        <HTrack />
        <ArrowBtn $w={11}><svg width="4" height="7" viewBox="0 0 4 7"><path d="M0 0v7l4-3.500z" fill="#333" /></svg></ArrowBtn>
      </HScroll>
    </TabBar>

    <StatusBar>
      <StatusLeft>
        <span>準備完了</span>
        <StatusGlyph $ml={17}><svg width="9" height="10" viewBox="0 0 9 10"><path d="M0 0h9v10H0z" fill="#555" /><path d="M1 3h7v1H1zM1 5.500h7v1H1zM1 8h7v1H1z" fill="#eee" /></svg></StatusGlyph>
        <StatusGlyph $ml={15}><svg width="10" height="12" viewBox="0 0 12 12" fill="none" stroke="#555"><path d="M1 4a5 5 0 0 1 8-2M11 6a5 5 0 0 1-3 4M2 7l1.500 3L5 11l4-5" /></svg></StatusGlyph>
        <Label $ml={1} $ls={-1}>アクセシビリティ: 問題ありません</Label>
      </StatusLeft>
      <StatusStats>
        <span>平均: 306,618,000</span>
        <span>データの個数: 7</span>
        <span>最小値: 3,120,000</span>
        <span>最大値: 1,555,983,000</span>
        <span>合計: 2,146,326,000</span>
      </StatusStats>
      <ViewBtn $on><svg width="11" height="11" viewBox="0 0 11 11" fill="none" stroke="#fff"><path d="M.5.5h10v10H.5zM.5 4h10M.5 7h10M4 .5v10M7 .5v10" /></svg></ViewBtn>
      <ViewBtn><svg width="11" height="11" viewBox="0 0 11 11" fill="none" stroke="#888"><path d="M.5.5h10v10H.5zM3 3h5v5H3z" /></svg></ViewBtn>
      <ViewBtn><svg width="11" height="11" viewBox="0 0 11 11" fill="none" stroke="#888"><path d="M.5 1.500h10v9H.5zM4 1.500v4h3v-4" /></svg></ViewBtn>
      <ZoomSign>−</ZoomSign>
      <ZoomTrack>
        <ZoomThumb $x={27} $h={9} $w={3} />
        <ZoomThumb $x={39} $h={3} $w={1} />
      </ZoomTrack>
      <ZoomSign>+</ZoomSign>
      <ZoomPct>75%</ZoomPct>
    </StatusBar>

    <Taskbar>
      <StartBtn><WindowsLogo /></StartBtn>
      <SearchBox>
        <Magnifier />
        <SearchHint>ここに入力して検索</SearchHint>
        <Tulips />
      </SearchBox>
      <TaskIcon $w={39.5}><TaskView /></TaskIcon>
      <TaskIcon $open><Folder /></TaskIcon>
      <TaskIcon $open><Chrome /></TaskIcon>
      <TaskIcon $open><Outlook /></TaskIcon>
      <TaskIcon $open $active><ExcelLogo /></TaskIcon>
      <TaskIcon $open><ZoomLogo /></TaskIcon>
      <Tray>
        <TrayItem $w={18}><svg width="10" height="6" viewBox="0 0 10 6" fill="none" stroke="#222"><path d="M.5 5.500 5 1l4.500 4.500" /></svg></TrayItem>
        <TrayItem $w={18}><svg width="9" height="13" viewBox="0 0 9 13"><path d="M2 0h5v8H2z" fill="#222" /><path d="M.5 6c0 4 8 4 8 0M4.500 9v3M2 12.500h5" fill="none" stroke="#222" /></svg></TrayItem>
        <TrayItem $w={22}><svg width="13" height="8" viewBox="0 0 13 8" fill="none" stroke="#222"><path d="M.5.500h11v7H.5zM12.500 3v2" /><path d="M2 2h3v4H2z" fill="#222" stroke="none" /></svg></TrayItem>
        <TrayItem $w={14}><svg width="13" height="11" viewBox="0 0 13 11" fill="none" stroke="#333"><path d="M.5 3.500h2.500L6 1v9L3 7.500H.5zM8 3.500c1 1 1 3 0 4M10 2c2 2 2 5 0 7" /></svg></TrayItem>
        <TrayItem $w={22}><ImeA>A</ImeA></TrayItem>
        <Clock><span>14:22</span><span>2023/02/14</span></Clock>
        <TrayItem $w={45} $pr={5}>
          <NotifyIcon>
            <svg width="12" height="12" viewBox="0 0 12 12"><path d="M0 0h12v9H5L2 12V9H0z" fill="#222" /><path d="M2 2.500h8M2 5h8" stroke="#d8d4d2" /></svg>
            <NotifyBadge>1</NotifyBadge>
          </NotifyIcon>
        </TrayItem>
      </Tray>
    </Taskbar>
  </Page>
);

export default App;
